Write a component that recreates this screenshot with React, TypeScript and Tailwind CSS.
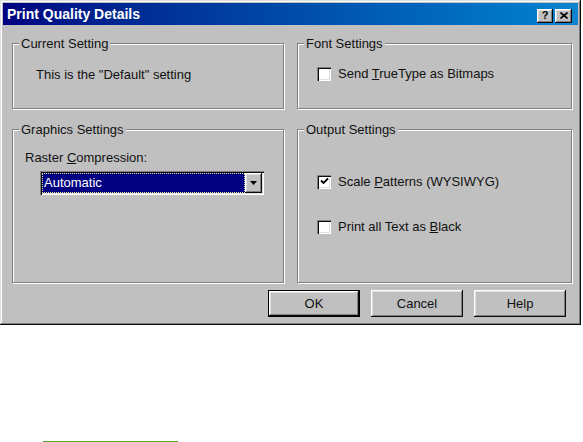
const raised =
  'shadow-[inset_-1px_-1px_#0a0a0a,inset_1px_1px_#fff,inset_-2px_-2px_#808080,inset_2px_2px_#dfdfdf]';
const sunken =
  'shadow-[inset_1px_1px_#808080,inset_2px_2px_#0a0a0a,inset_-1px_-1px_#fff,inset_-2px_-2px_#dfdfdf]';

function Checkbox({ checked, children }: { checked?: boolean; children: React.ReactNode }) {
  return (
    <div className="flex items-center h-[15px] gap-[7px]">
      <div className={`w-[14px] h-[14px] bg-white flex items-center justify-center ${sunken}`}>
        {checked && (
          <svg width="9" height="9" viewBox="0 0 9 9">
            <path d="M1 3.5 L3.5 6 L8 1.5" stroke="#000" strokeWidth="1.8" fill="none" />
          </svg>
        )}
      </div>
      <span>{children}</span>
    </div>
  );
}

function Group({ title, className, children }: { title: string; className: string; children: React.ReactNode }) {
  return (
    <fieldset
      className={`m-0 p-0 border border-[#808080] shadow-[1px_1px_0_#fff,inset_1px_1px_0_#fff] ${className}`}
    >
      <legend className="ml-[6px] px-[2px] bg-[#c0c0c0] leading-[15px]">{title}</legend>
      {children}
    </fieldset>
  );
}

function Button({ label, primary }: { label: string; primary?: boolean }) {
  return (
    <div
      className={`w-[92px] h-[27px] flex items-center justify-center ${
        primary ? 'border border-black' : ''
      }`}
    >
      <div className={`w-full h-full flex items-center justify-center bg-[#c0c0c0] ${raised}`}>{label}</div>
    </div>
  );
}

export default function App() {
  return (
    <div className="min-h-screen bg-white text-[13px] text-[#111] font-['Liberation_Sans',Arial,sans-serif]">
      <div
        className={`w-[581px] h-[325px] bg-[#c0c0c0] p-[3px] flex flex-col shadow-[inset_-1px_-1px_#0a0a0a,inset_1px_1px_#dfdfdf,inset_-2px_-2px_#808080,inset_2px_2px_#fff]`}
      >
        <div className="h-[22px] flex items-center justify-between pl-[4px] pr-[6px] bg-gradient-to-r from-[#000080] to-[#1084d0]">
          <span className="text-white font-bold text-[14px]">Print Quality Details</span>
          <div className="flex gap-[2px] mt-[3px]">
            <div className={`w-[16px] h-[14px] bg-[#c0c0c0] flex items-center justify-center text-[11px] font-bold leading-none text-black ${raised}`}>
              ?
            </div>
            <div className={`w-[17px] h-[14px] bg-[#c0c0c0] flex items-center justify-center ${raised}`}>
              <svg width="8" height="7" viewBox="0 0 8 7">
                <path d="M0.5 0.5 L7.5 6.5 M7.5 0.5 L0.5 6.5" stroke="#000" strokeWidth="1.6" />
              </svg>
            </div>
          </div>
        </div>

        <div className="flex-1 flex flex-col pl-[9px] pr-[6px] pt-[11px]">
          <div className="flex gap-[13px]">
            <Group title="Current Setting" className="w-[272px] h-[73px]">
              <div className="pt-[16px] pl-[23px] leading-[15px]">This is the "Default" setting</div>
            </Group>
            <Group title="Font Settings" className="flex-1 h-[73px]">
              <div className="pt-[15px] pl-[19px]">
                <Checkbox>
                  Send <span className="underline">T</span>rueType as Bitmaps
                </Checkbox>
              </div>
            </Group>
          </div>

          <div className="flex gap-[13px] mt-[13px]">
            <Group title="Graphics Settings" className="w-[272px] h-[161px]">
              <div className="pt-[13px] pl-[12px] leading-[15px]">
                Raster <span className="underline">C</span>ompression:
              </div>
              <div className={`mt-[6px] ml-[27px] w-[224px] h-[24px] bg-white p-[2px] flex ${sunken}`}>
                <div className="flex-1 bg-[#000080] border border-dotted border-[#e8e8a0] flex items-center pl-[1px] text-white">
                  Automatic
                </div>
                <div className={`w-[17px] bg-[#c0c0c0] flex items-center justify-center ${raised}`}>
                  <svg width="7" height="4" viewBox="0 0 7 4">
                    <path d="M0 0 H7 L3.5 4 Z" fill="#000" />
                  </svg>
                </div>
              </div>
            </Group>
            <Group title="Output Settings" className="flex-1 h-[161px]">
              <div className="pt-[37px] pl-[19px] flex flex-col gap-[30px]">
                <Checkbox checked>
                  Scale <span className="underline">P</span>atterns (WYSIWYG)
                </Checkbox>
                <Checkbox>
                  Print all Text as <span className="underline">B</span>lack
                </Checkbox>
              </div>
            </Group>
          </div>

          <div className="flex justify-end gap-[11px] mt-[7px] pr-[6px]">
            <Button label="OK" primary />
            <Button label="Cancel" />
            <Button label="Help" />
          </div>
        </div>
      </div>

      <div className="mt-[116px] ml-[43px] w-[135px] h-[2px] bg-[#5aa82a]" />
    </div>
  );
}
